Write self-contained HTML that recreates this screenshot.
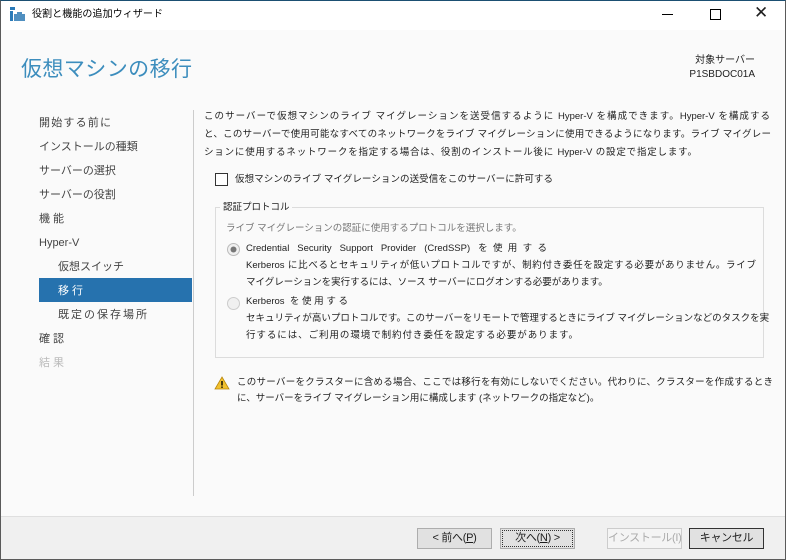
<!DOCTYPE html>
<html><head><meta charset="utf-8"><style>
*{margin:0;padding:0;box-sizing:border-box}
body{width:786px;height:560px;overflow:hidden;background:#fafafa;font-family:"Liberation Sans","Noto Sans CJK JP",sans-serif;font-size:11px;color:#1e1e1e;position:relative}
.frame{position:absolute;inset:0;border:1px solid #5a5a5a;border-top:1px solid #1b4f72}
.title{position:absolute;left:0;top:0;width:786px;height:30px;background:#fff}
.abs{position:absolute;white-space:nowrap}
.j{position:absolute;text-align:justify;text-align-last:justify;font-size:9.5px;line-height:14px;white-space:nowrap}
.n{font-size:11px;color:#444}
.btn{position:absolute;top:528px;height:21px;border:1px solid #adadad;background:#e1e1e1;text-align:center;line-height:19px;font-size:11px;white-space:nowrap;letter-spacing:-0.3px}
</style></head><body>
<div class="title">
<svg class="abs" style="left:10px;top:7px" width="15" height="15"><rect x="0" y="0" width="5" height="3" fill="#2a7ab8"/><rect x="0" y="4" width="3" height="10" fill="#2a7ab8"/><rect x="4" y="7" width="11" height="7" fill="#4f8fc0"/><rect x="7" y="5" width="5" height="2" fill="#4f8fc0"/></svg>
<div class="j" style="left:32px;top:8px;width:131px;font-size:10px;color:#000">役割と機能の追加ウィザード</div>
<div class="abs" style="left:662px;top:14px;width:11px;height:1px;background:#000"></div>
<div class="abs" style="left:710px;top:9px;width:11px;height:11px;border:1px solid #000"></div>
<div class="abs" style="left:754px;top:3px;font-size:17px">✕</div>
</div>
<div class="j" style="left:21px;top:57px;width:171px;font-size:21px;line-height:26px;color:#3c8dbd">仮想マシンの移行</div>
<div class="abs" style="left:600px;top:54px;width:155px;text-align:right;font-size:10px;line-height:14px">対象サーバー<br>P1SBDOC01A</div>

<div class="j n" style="left:39px;top:116px;width:72px">開始する前に</div>
<div class="j n" style="left:39px;top:140px;width:96px">インストールの種類</div>
<div class="j n" style="left:39px;top:164px;width:75px">サーバーの選択</div>
<div class="j n" style="left:39px;top:188px;width:75px">サーバーの役割</div>
<div class="j n" style="left:39px;top:212px;width:25px">機能</div>
<div class="j n" style="left:39px;top:236px;width:47px">Hyper-V</div>
<div class="j n" style="left:58px;top:260px;width:64px">仮想スイッチ</div>
<div class="abs" style="top:278px;left:39px;width:153px;height:24px;background:#2672ae"></div>
<div class="j n" style="left:58px;top:284px;width:25px;color:#fff">移行</div>
<div class="j n" style="left:58px;top:308px;width:89px">既定の保存場所</div>
<div class="j n" style="left:39px;top:332px;width:25px">確認</div>
<div class="j n" style="left:39px;top:356px;width:25px;color:#bbb">結果</div>

<div class="abs" style="left:193px;top:110px;width:1px;height:386px;background:#ccc"></div>
<div class="j" style="left:204px;top:110px;width:566px">このサーバーで仮想マシンのライブ マイグレーションを送受信するように Hyper-V を構成できます。Hyper-V を構成する</div>
<div class="j" style="left:204px;top:128px;width:567px">と、このサーバーで使用可能なすべてのネットワークをライブ マイグレーションに使用できるようになります。ライブ マイグレー</div>
<div class="j" style="left:204px;top:146px;width:493px">ションに使用するネットワークを指定する場合は、役割のインストール後に Hyper-V の設定で指定します。</div>
<div class="abs" style="left:215px;top:173px;width:13px;height:13px;border:1px solid #333;background:#fff"></div>
<div class="j" style="left:235px;top:173px;width:318px">仮想マシンのライブ マイグレーションの送受信をこのサーバーに許可する</div>
<div class="abs" style="left:215px;top:207px;width:549px;height:151px;border:1px solid #dcdcdc"></div>
<div class="abs" style="left:220px;top:200px;width:72px;height:14px;background:#fafafa"></div>
<div class="j" style="left:223px;top:201px;width:66px">認証プロトコル</div>
<div class="j" style="left:226px;top:222px;width:266px;color:#777">ライブ マイグレーションの認証に使用するプロトコルを選択します。</div>
<svg class="abs" style="left:227px;top:243px" width="13" height="13"><circle cx="6.5" cy="6.5" r="6" fill="#f0f0f0" stroke="#bbb"/><circle cx="6.5" cy="6.5" r="3" fill="#777"/></svg>
<div class="j" style="left:246px;top:242px;width:301px">Credential Security Support Provider (CredSSP) を使用する</div>
<div class="j" style="left:246px;top:259px;width:510px">Kerberos に比べるとセキュリティが低いプロトコルですが、制約付き委任を設定する必要がありません。ライブ</div>
<div class="j" style="left:246px;top:276px;width:352px">マイグレーションを実行するには、ソース サーバーにログオンする必要があります。</div>
<svg class="abs" style="left:227px;top:297px" width="13" height="13"><circle cx="6.5" cy="6.5" r="6" fill="#f0f0f0" stroke="#ccc"/></svg>
<div class="j" style="left:246px;top:295px;width:102px">Kerberos を使用する</div>
<div class="j" style="left:246px;top:312px;width:514px">セキュリティが高いプロトコルです。このサーバーをリモートで管理するときにライブ マイグレーションなどのタスクを実</div>
<div class="j" style="left:246px;top:329px;width:332px">行するには、ご利用の環境で制約付き委任を設定する必要があります。</div>
<svg class="abs" style="left:214px;top:376px" width="16" height="14"><path d="M8 1 L15 13 L1 13 Z" fill="#f2c12e" stroke="#b8860b" stroke-width="0.8"/><rect x="7.3" y="5" width="1.4" height="4.5" fill="#000"/><rect x="7.3" y="10.5" width="1.4" height="1.4" fill="#000"/></svg>
<div class="j" style="left:237px;top:376px;width:536px">このサーバーをクラスターに含める場合、ここでは移行を有効にしないでください。代わりに、クラスターを作成するとき</div>
<div class="j" style="left:237px;top:392px;width:350px">に、サーバーをライブ マイグレーション用に構成します (ネットワークの指定など)。</div>
<div class="abs" style="left:0;top:516px;width:786px;height:44px;background:#f0f0f0;border-top:1px solid #dfdfdf"></div>
<div class="btn" style="left:417px;width:75px">&lt; 前へ(<u>P</u>)</div>
<div class="btn" style="left:500px;width:75px;outline:1px dotted #333;outline-offset:-3px">次へ(<u>N</u>) &gt;</div>
<div class="btn" style="left:607px;width:75px;color:#aaa;background:#f4f4f4;border-color:#ccc">インストール(I)</div>
<div class="btn" style="left:689px;width:75px;border-color:#333">キャンセル</div>
<div class="frame"></div>
</body></html>
